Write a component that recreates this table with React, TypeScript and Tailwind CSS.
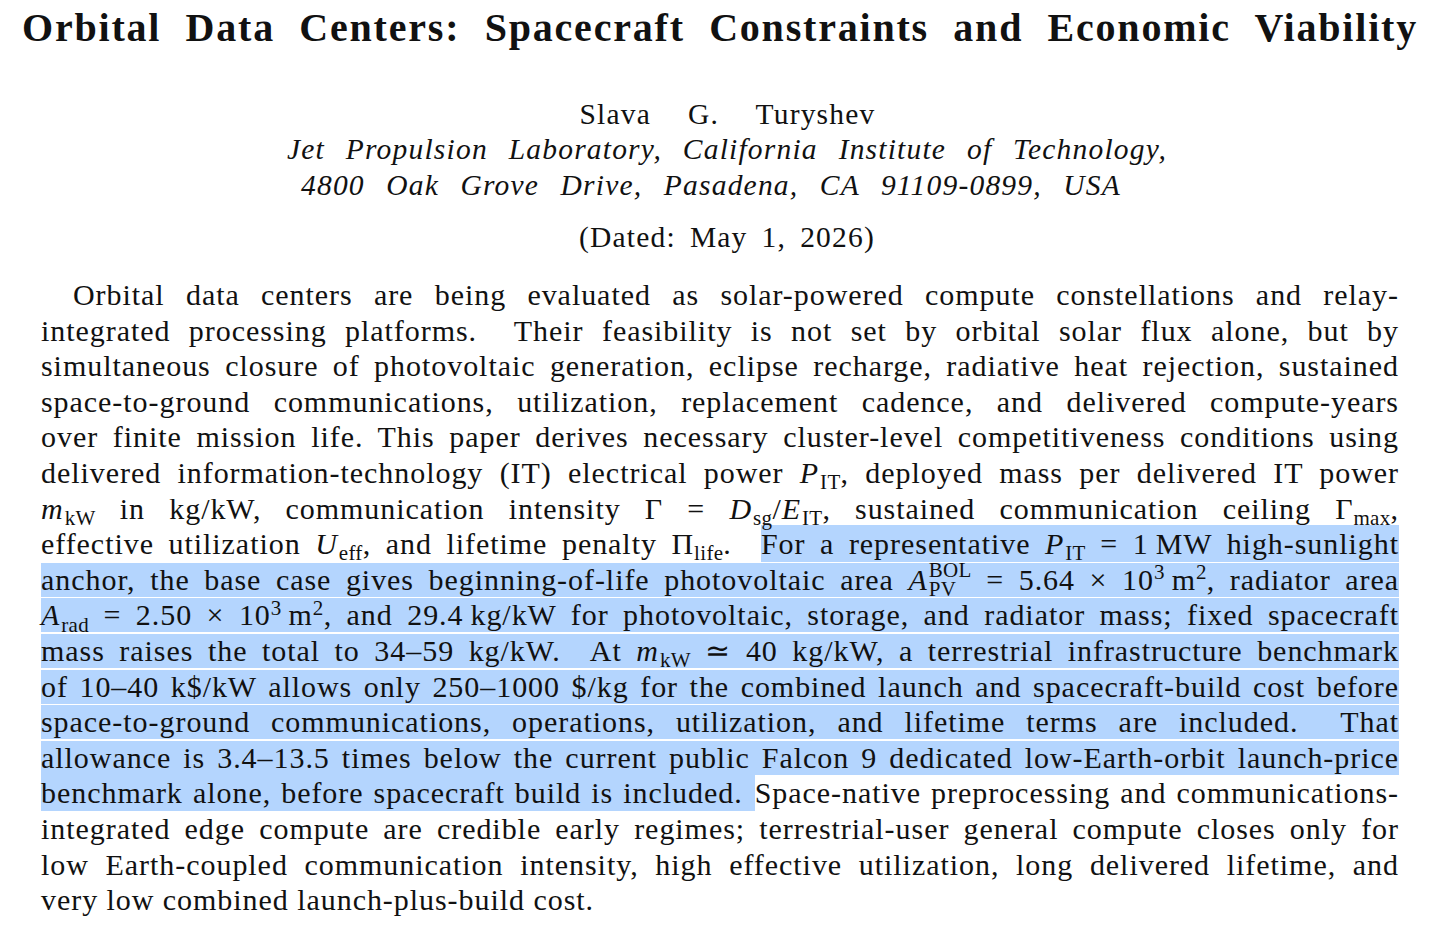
import type { ReactNode } from 'react';

const HL = 'bg-[#b4d5fe]';

function Sub({ children }: { children: ReactNode }) {
  return <span className="relative top-[0.3em] text-[0.7em] leading-none not-italic tracking-[0.3px]">{children}</span>;
}

function Sup({ children }: { children: ReactNode }) {
  return <span className="relative top-[-0.5em] text-[0.7em] leading-none not-italic tracking-[0.3px]">{children}</span>;
}

function V({ children }: { children: ReactNode }) {
  return <i className="pr-[1px]">{children}</i>;
}

// one justified line of the abstract
function Line({ children, hl, last, indent }: { children: ReactNode; hl?: boolean; last?: boolean; indent?: boolean }) {
  return (
    <div
      className={`h-[34px] mb-[1.6px] leading-[34px] whitespace-nowrap ${
        last ? 'text-left' : 'text-justify [text-align-last:justify]'
      } ${hl ? HL : ''} ${indent ? 'pl-[32px]' : ''}`}
    >
      {children}
    </div>
  );
}

function Mark({ children, end }: { children: ReactNode; end?: boolean }) {
  return <span className={`${HL} py-[2px] ${end ? 'pr-[12px]' : ''}`}>{children}</span>;
}

export default function App() {
  return (
    <div className="w-[1456px] h-[936px] bg-white text-[#111] font-['Liberation_Serif','Times_New_Roman',serif] overflow-hidden">
      <div className="ml-[22px] w-[1396px] h-[56px] leading-[56px] text-[40px] tracking-[1.8px] font-bold text-justify [text-align-last:justify] whitespace-nowrap">
        Orbital Data Centers: Spacecraft Constraints and Economic Viability
      </div>

      <div className="mt-[40px] flex flex-col items-center text-[29.5px] tracking-[1.2px]">
        <div className="w-[296px] ml-[-1px] leading-[36px] text-justify [text-align-last:justify] whitespace-nowrap">
          Slava G. Turyshev
        </div>
        <div className="w-[880px] ml-[-2px] leading-[35.5px] italic text-justify [text-align-last:justify] whitespace-nowrap">
          Jet Propulsion Laboratory, California Institute of Technology,
        </div>
        <div className="w-[820px] ml-[-34px] leading-[35.5px] italic text-justify [text-align-last:justify] whitespace-nowrap">
          4800 Oak Grove Drive, Pasadena, CA 91109-0899, USA
        </div>
        <div className="mt-[16px] w-[296px] ml-[-2px] leading-[36px] text-justify [text-align-last:justify] whitespace-nowrap">
          (Dated: May 1, 2026)
        </div>
      </div>

      <div className="mt-[23px] ml-[41px] w-[1358px] text-[30px] tracking-[0.95px]">
        <Line indent>
          Orbital data centers are being evaluated as solar-powered compute constellations and relay-
        </Line>
        <Line>
          integrated processing platforms. &nbsp;Their feasibility is not set by orbital solar flux alone, but by
        </Line>
        <Line>
          simultaneous closure of photovoltaic generation, eclipse recharge, radiative heat rejection, sustained
        </Line>
        <Line>
          space-to-ground communications, utilization, replacement cadence, and delivered compute-years
        </Line>
        <Line>
          over finite mission life. This paper derives necessary cluster-level competitiveness conditions using
        </Line>
        <Line>
          delivered information-technology (IT) electrical power <V>P</V>
          <Sub>IT</Sub>, deployed mass per delivered IT power
        </Line>
        <Line>
          <V>m</V>
          <Sub>kW</Sub> in kg/kW, communication intensity Γ = <V>D</V>
          <Sub>sg</Sub>/<V>E</V>
          <Sub>IT</Sub>, sustained communication ceiling Γ<Sub>max</Sub>,
        </Line>
        <Line>
          effective utilization <V>U</V>
          <Sub>eff</Sub>, and lifetime penalty Π<Sub>life</Sub>. &nbsp;
          <Mark>
            For a representative <V>P</V>
            <Sub>IT</Sub> = 1&#8201;MW high-sunlight
          </Mark>
        </Line>
        <Line hl>
          anchor, the base case gives beginning-of-life photovoltaic area <V>A</V>
          <span className="relative text-[0.7em] leading-none tracking-[0.3px]">
            <span className="relative top-[-0.6em]">BOL</span>
            <span className="absolute left-0 top-[0.38em]">PV</span>
          </span>{' '}
          = 5.64 × 10<Sup>3</Sup>&#8201;m<Sup>2</Sup>, radiator area
        </Line>
        <Line hl>
          <V>A</V>
          <Sub>rad</Sub> = 2.50 × 10<Sup>3</Sup>&#8201;m<Sup>2</Sup>, and 29.4&#8201;kg/kW for photovoltaic, storage, and radiator mass; fixed spacecraft
        </Line>
        <Line hl>
          mass raises the total to 34–59 kg/kW. &nbsp;At <V>m</V>
          <Sub>kW</Sub> ≃ 40 kg/kW, a terrestrial infrastructure benchmark
        </Line>
        <Line hl>
          of 10–40 k$/kW allows only 250–1000 $/kg for the combined launch and spacecraft-build cost before
        </Line>
        <Line hl>
          space-to-ground communications, operations, utilization, and lifetime terms are included. &nbsp;That
        </Line>
        <Line hl>
          allowance is 3.4–13.5 times below the current public Falcon 9 dedicated low-Earth-orbit launch-price
        </Line>
        <Line>
          <Mark end>benchmark alone, before spacecraft build is included.</Mark>Space-native preprocessing and communications-
        </Line>
        <Line>
          integrated edge compute are credible early regimes; terrestrial-user general compute closes only for
        </Line>
        <Line>
          low Earth-coupled communication intensity, high effective utilization, long delivered lifetime, and
        </Line>
        <Line last>very low combined launch-plus-build cost.</Line>
      </div>
    </div>
  );
}
